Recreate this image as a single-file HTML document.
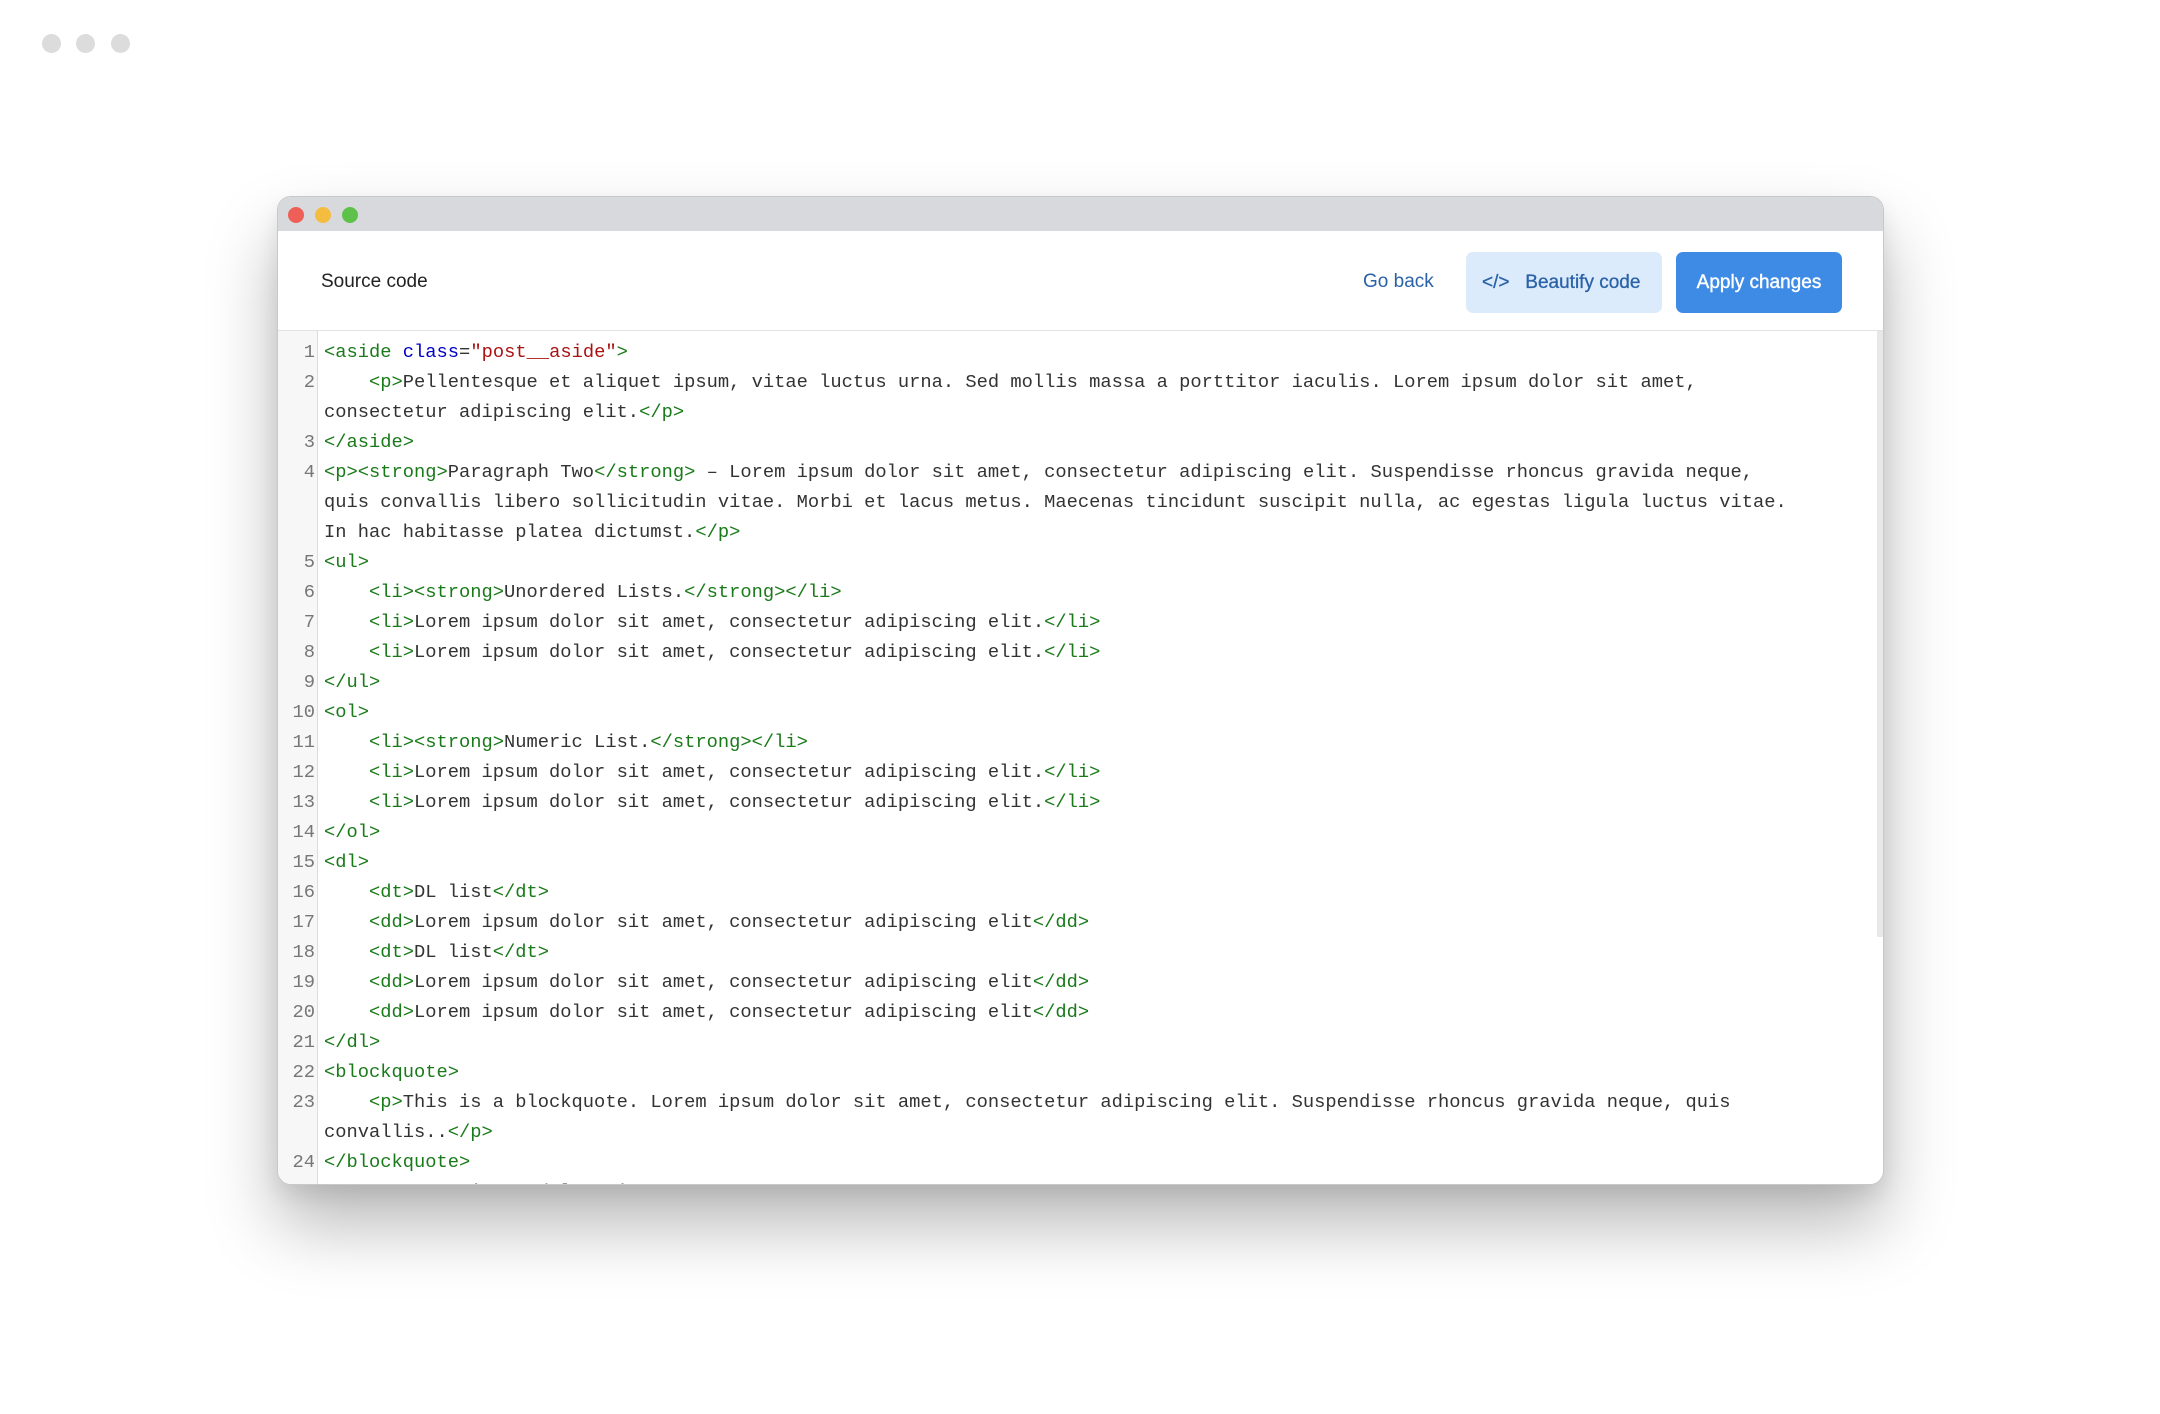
<!DOCTYPE html>
<html><head><meta charset="utf-8"><style>
*{margin:0;padding:0;box-sizing:border-box}
html,body{width:2160px;height:1414px;background:#fff;overflow:hidden;position:relative;font-family:"Liberation Sans",sans-serif}
.d{position:absolute;top:34px;width:19px;height:19px;border-radius:50%;background:#dcdcdc}
.win{position:absolute;left:277px;top:196px;width:1607px;height:989px;border-radius:14px;overflow:hidden;background:#fff;border:1px solid #c8c8cc;box-shadow:0 40px 70px rgba(0,0,0,.28),0 10px 20px rgba(0,0,0,.08)}
.tb{height:34px;background:#d8d9dc;position:relative}
.tb i{position:absolute;top:10px;width:16px;height:16px;border-radius:50%}
.hd{height:100px;border-bottom:1px solid #e2e2e2;position:relative}
.hd .t{position:absolute;left:43px;top:40px;font-size:19px;color:#222}
.gb{position:absolute;left:1085px;top:40px;font-size:19px;color:#2a62a8}
.bb{position:absolute;left:1188px;top:21px;width:196px;height:61px;border-radius:7px;background:#dcebfb;color:#2a62a8;font-size:19px;line-height:61px;padding-left:16px;white-space:nowrap;-webkit-text-stroke:0.3px #2a62a8}
.ap{position:absolute;left:1398px;top:21px;width:166px;height:61px;border-radius:7px;background:#3e8be6;color:#fff;font-size:19px;line-height:61px;text-align:center;-webkit-text-stroke:0.4px #fff}
.ed{position:absolute;left:0;top:134px;width:1607px;height:860px}
.gut{position:absolute;left:0;top:0;width:40px;height:100%;background:#f7f7f7;border-right:1px solid #ddd}
.sb{position:absolute;right:0;top:0;width:8px;height:606px;background:#e8e8e8}
.code{position:absolute;left:0;top:6px;font-family:"Liberation Mono",monospace;font-size:18.75px;color:#333}
.r{height:30px;line-height:30px;white-space:pre;position:relative;padding-left:46px}
.n{position:absolute;left:0;width:37px;text-align:right;color:#777}
.g{color:#1a7a1a}.b{color:#0000c8}.s{color:#a11}
</style></head><body>
<div class="d" style="left:42px"></div><div class="d" style="left:76px"></div><div class="d" style="left:111px"></div>
<div class="win">
<div class="tb"><i style="left:10px;background:#ed5f57"></i><i style="left:37px;background:#f4bd3f"></i><i style="left:64px;background:#5ec24a"></i></div>
<div class="hd"><div class="t">Source code</div><div class="gb">Go back</div><div class="bb">&lt;/&gt;&nbsp;&nbsp; Beautify code</div><div class="ap">Apply changes</div></div>
<div class="ed"><div class="gut"></div><div class="sb"></div>
<div class="code">
<div class="r"><span class="n">1</span><span class="g">&lt;aside</span> <span class="b">class</span>=<span class="s">"post__aside"</span><span class="g">&gt;</span></div>
<div class="r"><span class="n">2</span>    <span class="g">&lt;p&gt;</span>Pellentesque et aliquet ipsum, vitae luctus urna. Sed mollis massa a porttitor iaculis. Lorem ipsum dolor sit amet,</div>
<div class="r">consectetur adipiscing elit.<span class="g">&lt;/p&gt;</span></div>
<div class="r"><span class="n">3</span><span class="g">&lt;/aside&gt;</span></div>
<div class="r"><span class="n">4</span><span class="g">&lt;p&gt;&lt;strong&gt;</span>Paragraph Two<span class="g">&lt;/strong&gt;</span> – Lorem ipsum dolor sit amet, consectetur adipiscing elit. Suspendisse rhoncus gravida neque,</div>
<div class="r">quis convallis libero sollicitudin vitae. Morbi et lacus metus. Maecenas tincidunt suscipit nulla, ac egestas ligula luctus vitae.</div>
<div class="r">In hac habitasse platea dictumst.<span class="g">&lt;/p&gt;</span></div>
<div class="r"><span class="n">5</span><span class="g">&lt;ul&gt;</span></div>
<div class="r"><span class="n">6</span>    <span class="g">&lt;li&gt;&lt;strong&gt;</span>Unordered Lists.<span class="g">&lt;/strong&gt;&lt;/li&gt;</span></div>
<div class="r"><span class="n">7</span>    <span class="g">&lt;li&gt;</span>Lorem ipsum dolor sit amet, consectetur adipiscing elit.<span class="g">&lt;/li&gt;</span></div>
<div class="r"><span class="n">8</span>    <span class="g">&lt;li&gt;</span>Lorem ipsum dolor sit amet, consectetur adipiscing elit.<span class="g">&lt;/li&gt;</span></div>
<div class="r"><span class="n">9</span><span class="g">&lt;/ul&gt;</span></div>
<div class="r"><span class="n">10</span><span class="g">&lt;ol&gt;</span></div>
<div class="r"><span class="n">11</span>    <span class="g">&lt;li&gt;&lt;strong&gt;</span>Numeric List.<span class="g">&lt;/strong&gt;&lt;/li&gt;</span></div>
<div class="r"><span class="n">12</span>    <span class="g">&lt;li&gt;</span>Lorem ipsum dolor sit amet, consectetur adipiscing elit.<span class="g">&lt;/li&gt;</span></div>
<div class="r"><span class="n">13</span>    <span class="g">&lt;li&gt;</span>Lorem ipsum dolor sit amet, consectetur adipiscing elit.<span class="g">&lt;/li&gt;</span></div>
<div class="r"><span class="n">14</span><span class="g">&lt;/ol&gt;</span></div>
<div class="r"><span class="n">15</span><span class="g">&lt;dl&gt;</span></div>
<div class="r"><span class="n">16</span>    <span class="g">&lt;dt&gt;</span>DL list<span class="g">&lt;/dt&gt;</span></div>
<div class="r"><span class="n">17</span>    <span class="g">&lt;dd&gt;</span>Lorem ipsum dolor sit amet, consectetur adipiscing elit<span class="g">&lt;/dd&gt;</span></div>
<div class="r"><span class="n">18</span>    <span class="g">&lt;dt&gt;</span>DL list<span class="g">&lt;/dt&gt;</span></div>
<div class="r"><span class="n">19</span>    <span class="g">&lt;dd&gt;</span>Lorem ipsum dolor sit amet, consectetur adipiscing elit<span class="g">&lt;/dd&gt;</span></div>
<div class="r"><span class="n">20</span>    <span class="g">&lt;dd&gt;</span>Lorem ipsum dolor sit amet, consectetur adipiscing elit<span class="g">&lt;/dd&gt;</span></div>
<div class="r"><span class="n">21</span><span class="g">&lt;/dl&gt;</span></div>
<div class="r"><span class="n">22</span><span class="g">&lt;blockquote&gt;</span></div>
<div class="r"><span class="n">23</span>    <span class="g">&lt;p&gt;</span>This is a blockquote. Lorem ipsum dolor sit amet, consectetur adipiscing elit. Suspendisse rhoncus gravida neque, quis</div>
<div class="r">convallis..<span class="g">&lt;/p&gt;</span></div>
<div class="r"><span class="n">24</span><span class="g">&lt;/blockquote&gt;</span></div>
<div class="r"><span class="n">25</span>    <span class="g">&lt;p&gt;</span>Lorem ipsum dolor sit amet</div>
</div></div>
</div>
</body></html>
